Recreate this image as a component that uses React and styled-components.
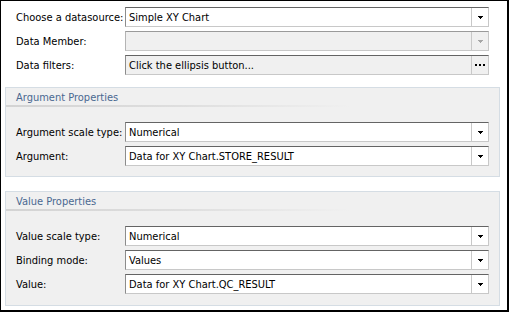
import React from 'react';
import styled, { createGlobalStyle } from 'styled-components';

const GlobalStyle = createGlobalStyle`
    html, body {
        margin: 0;
        padding: 0;
        background: #ffffff;
    }
    body {
        font-family: "DejaVu Sans Condensed", "Liberation Sans", sans-serif;
        font-size: 11px;
        color: #000000;
    }
`;

const Frame = styled.div`
    box-sizing: border-box;
    width: 509px;
    height: 312px;
    border: 1px solid #000000;
    border-right-width: 2px;
    border-bottom-width: 2px;
    padding: 6px 7px 0 4px;
    display: flex;
    flex-direction: column;
`;

const Rows = styled.div`
    display: flex;
    flex-direction: column;
    gap: 4px;
    padding: ${props => props.inset || '0 11px'};
`;

const Row = styled.div`
    display: grid;
    grid-template-columns: 109px 1fr;
    align-items: center;
    height: 20px;
`;

const Label = styled.span`
    white-space: nowrap;
`;

const Combo = styled.div`
    box-sizing: border-box;
    height: 20px;
    display: flex;
    align-items: stretch;
    background: ${props => (props.muted ? '#f0f0f0' : '#ffffff')};
    border-top: 1px solid ${props => (props.disabled ? '#9a9a9a' : '#646464')};
    border-left: 1px solid ${props => (props.disabled ? '#b4b4b4' : '#8c8c8c')};
    border-right: 1px solid #c8c8c8;
    border-bottom: 1px solid #c8c8c8;
`;

const ComboText = styled.span`
    flex: 1;
    display: flex;
    align-items: center;
    padding-left: 3px;
    white-space: nowrap;
    overflow: hidden;
`;

const ComboButton = styled.span`
    width: 16px;
    display: flex;
    align-items: center;
    justify-content: center;
    border-left: 1px solid #c8c8c8;
`;

const Panel = styled.section`
    box-sizing: border-box;
    margin-top: ${props => props.top};
    background: #f0f0f0;
    border: 1px solid #d5dde4;
    padding-bottom: ${props => props.bottom};
`;

const PanelHeader = styled.div`
    height: 18px;
    display: flex;
    align-items: center;
    padding-left: 10px;
    color: #4a6890;
    position: relative;
    margin-bottom: 16px;
    &::after {
        content: '';
        position: absolute;
        left: 0;
        right: 0;
        bottom: -1px;
        height: 2px;
        background: linear-gradient(to right, #d3d3d3 0%, #dedede 35%, rgba(240, 240, 240, 0) 70%);
    }
`;

const Arrow = ({ disabled }) => (
    <svg width="5" height="3" viewBox="0 0 5 3" shapeRendering="crispEdges">
        <g fill={disabled ? '#a6a6a6' : '#000000'}>
            <rect x="0" y="0" width="5" height="1" />
            <rect x="1" y="1" width="3" height="1" />
            <rect x="2" y="2" width="1" height="1" />
        </g>
    </svg>
);

const Ellipsis = () => (
    <svg width="10" height="2" viewBox="0 0 10 2" shapeRendering="crispEdges">
        <g fill="#000000">
            <rect x="0" y="0" width="2" height="2" />
            <rect x="4" y="0" width="2" height="2" />
            <rect x="8" y="0" width="2" height="2" />
        </g>
    </svg>
);

const Field = ({ label, value, disabled, muted, ellipsis }) => (
    <Row>
        <Label>{label}</Label>
        <Combo disabled={disabled} muted={muted || disabled}>
            <ComboText>{value}</ComboText>
            <ComboButton>
                {ellipsis ? <Ellipsis /> : <Arrow disabled={disabled} />}
            </ComboButton>
        </Combo>
    </Row>
);

const PropertyGroup = ({ title, fields, top, bottom }) => (
    <Panel top={top} bottom={bottom}>
        <PanelHeader>{title}</PanelHeader>
        <Rows inset="0 10px">
            {fields.map(field => (
                <Field key={field.label} {...field} />
            ))}
        </Rows>
    </Panel>
);

const argumentFields = [
    { label: 'Argument scale type:', value: 'Numerical' },
    { label: 'Argument:', value: 'Data for XY Chart.STORE_RESULT' }
];

const valueFields = [
    { label: 'Value scale type:', value: 'Numerical' },
    { label: 'Binding mode:', value: 'Values' },
    { label: 'Value:', value: 'Data for XY Chart.QC_RESULT' }
];

const App = () => (
    <>
        <GlobalStyle />
        <Frame>
            <Rows>
                <Field label="Choose a datasource:" value="Simple XY Chart" />
                <Field label="Data Member:" value="" disabled />
                <Field label="Data filters:" value="Click the ellipsis button..." muted ellipsis />
            </Rows>
            <PropertyGroup title="Argument Properties" fields={argumentFields} top="12px" bottom="10px" />
            <PropertyGroup title="Value Properties" fields={valueFields} top="14px" bottom="11px" />
        </Frame>
    </>
);

export default App;
